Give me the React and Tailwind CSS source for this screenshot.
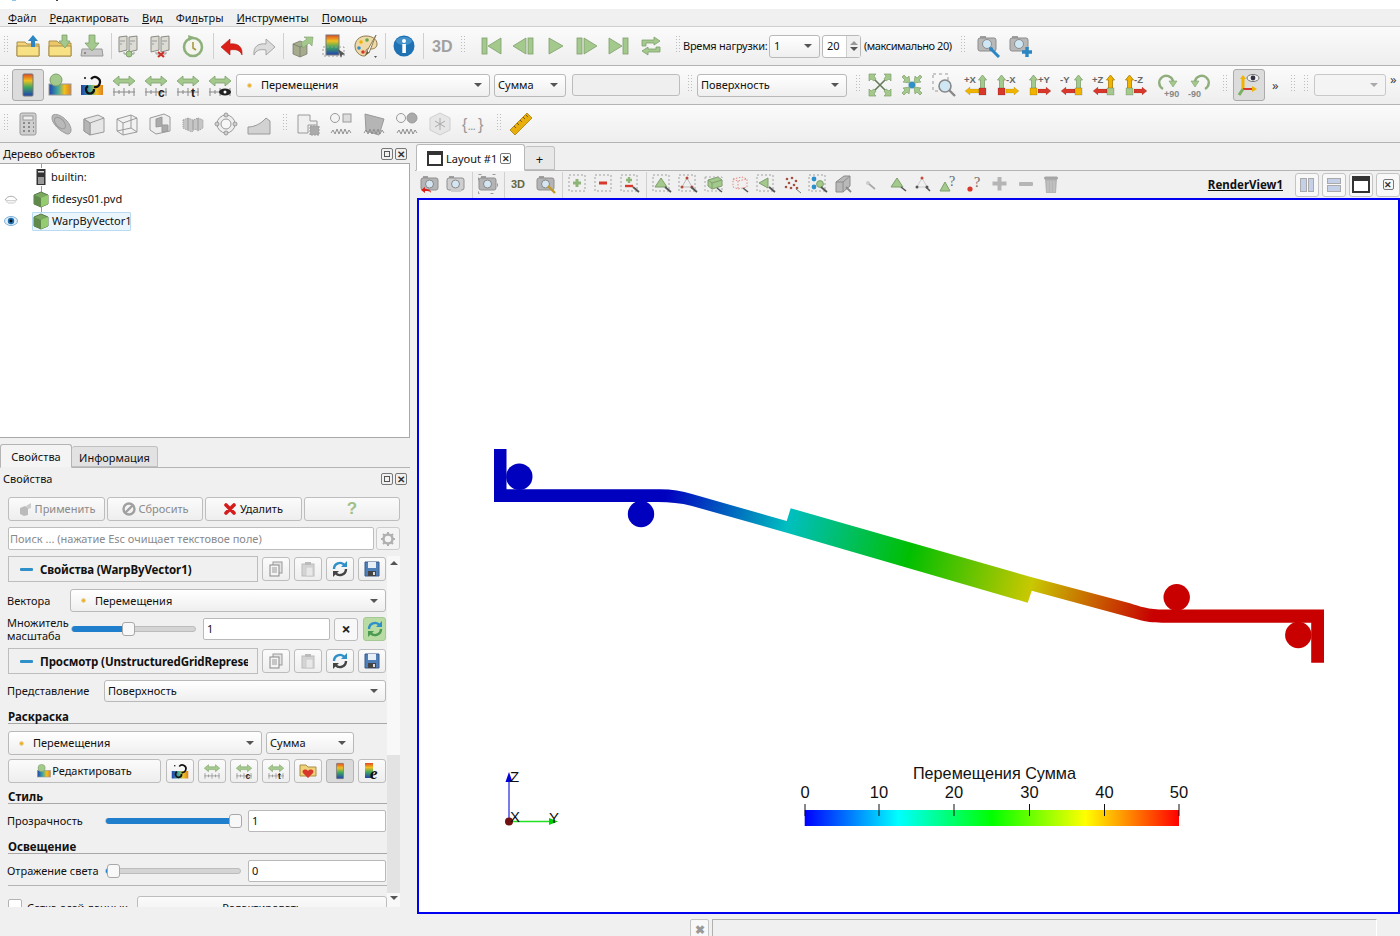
import React from 'react';

const GR = '#a3c98c';
const GS = '#7f9f6c';
const YL = '#f0b400';
const RD = '#d8382c';
const BL = '#2f8fc8';

const Svg = ({ s = 24, children }) => <svg width={s} height={s} viewBox="0 0 24 24" className="block shrink-0">{children}</svg>;

const T = ({ x, y, size = 7, fill = '#666', weight = 'bold', children, family = 'Liberation Sans', anchor = 'start', italic }) => <text x={x} y={y} fontSize={size} fontWeight={weight} fontFamily={family} fill={fill} textAnchor={anchor} fontStyle={italic ? 'italic' : 'normal'}>{children}</text>;

const ArrowUp = ({ x, y, h = 14, c = GR, s = GS, w = 6 }) => <path d={`M${x} ${y} l${w / 2 + 1} ${5} h${-w / 2 + 1} v${h - 5} h${-4} v${-(h - 5)} h${-w / 2 + 1} z`} fill={c} stroke={s} strokeWidth="0.8" />;

const FolderUp = () => <Svg>
    <path d="M1 8h8l2 2h12v12H1z" fill="#f3d478" stroke="#a88e48" />
    <path d="M1 12h22v10H1z" fill="#f8e084" stroke="#a88e48" />
    <path d="M17 1l5 6h-3v6h-4V7h-3z" fill="#2c86c4" />
  </Svg>;
const FolderDown = () => <Svg>
    <path d="M1 7h8l2 2h12v13H1z" fill="#edc66a" stroke="#a88e48" />
    <path d="M1 12h22v10H1z" fill="#f8e084" stroke="#a88e48" />
    <path d="M14 1h5v6h3l-5 7-6-7h3z" fill={GR} stroke={GS} strokeWidth="0.8" />
  </Svg>;
const SaveData = () => <Svg>
    <path d="M2 15h20l1 7H1z" fill="#c9c9c9" stroke="#999" />
    <circle cx="5" cy="19" r="1" fill="#777" />
    <path d="M9 1h6v8h4l-7 8-7-8h4z" fill={GR} stroke={GS} strokeWidth="0.8" />
  </Svg>;
const Srv = ({ x }) => <g>
    <path d={`M${x} 3l8-1v14l-8 2z`} fill="#dcdcd4" stroke="#8a8a84" />
    <path d={`M${x + 1} 7h5M${x + 1} 10h2`} stroke="#999" />
  </g>;
const Servers = ({ dot }) => <Svg>
    <Srv x={2} /><Srv x={12} />
    <path d="M7 18v2h10v-2" fill="none" stroke="#999" />
    {dot === 'g' ? <circle cx="12" cy="20" r="3" fill={GR} stroke={GS} /> : <path d="M9 18l6 5m0-5l-6 5" stroke="#c83228" strokeWidth="2.2" />}
  </Svg>;
const Recent = () => <Svg>
    <circle cx="12" cy="13" r="9" fill="#f5f5f0" stroke="#8eb07a" strokeWidth="2.6" />
    <path d="M12 8v6l3 2" stroke="#a89a40" strokeWidth="1.6" fill="none" />
    <path d="M7 1l6 2-5 4z" fill="#8eb07a" />
  </Svg>;
const Undo = () => <Svg>
    <path d="M1 13l9-8v5c7-1 13 2 12 11-2-5-6-6-12-5v5z" fill="#dc2018" stroke="#b01c14" strokeWidth="0.6" />
  </Svg>;
const Redo = () => <Svg>
    <path d="M23 13l-9-8v5C7 9 1 12 2 21c2-5 6-6 12-5v5z" fill="#dcdcdc" stroke="#a6a6a6" />
  </Svg>;
const Cube = ({ c = '#c9c9bd', s = '#777' }) => <g>
    <path d="M3 10l7-3 7 3v10l-7 3-7-3z" fill={c} stroke={s} strokeWidth="0.7" />
    <path d="M10 13v10M3 10l7 3 7-3" fill="none" stroke={s} strokeWidth="0.7" />
  </g>;
const ChangeInput = () => <Svg>
    <Cube c="#a6ab8e" s="#6f7466" />
    <path d="M11 9L17 5 14 3h9l-1 9-3-3-6 5z" fill={GR} stroke={GS} strokeWidth="0.6" />
  </Svg>;
const FindData = () => <Svg>
    <rect x="4" y="1" width="13" height="20" fill="url(#gScale)" stroke="#777" />
    <rect x="1" y="13" width="21" height="9" fill="none" stroke="#999" strokeDasharray="2 2" />
    <path d="M16 15l7 5-3 1-1 3z" fill="#555" />
  </Svg>;
const Palette = () => <Svg>
    <path d="M12 2C5 2 1 7 1 12c0 6 5 10 9 10 3 0 2-3 2-5 0-3 3-2 5-2 4 0 6-2 6-5 0-5-5-8-11-8z" fill="#f0d9a8" stroke="#8d7a50" />
    <circle cx="7" cy="8" r="1.8" fill={YL} /><circle cx="13" cy="6" r="1.8" fill="#60a848" />
    <circle cx="5" cy="14" r="1.8" fill={BL} /><circle cx="9" cy="18" r="1.8" fill={RD} />
    <path d="M22 1L13 17l2 2z" fill="#fff" stroke="#8d7a50" />
    <path d="M13 17l-2 5 4-3z" fill="#6a5a30" />
    <path d="M20 22l3 0-1.5 2z" fill="#555" />
  </Svg>;
const Info = () => <Svg>
    <circle cx="12" cy="12" r="10.5" fill="#1e72b4" />
    <ellipse cx="12" cy="7" rx="8" ry="4" fill="#5ba6da" opacity="0.6" />
    <rect x="10.3" y="10" width="3.6" height="9" fill="#fff" /><circle cx="12" cy="7" r="2" fill="#fff" />
  </Svg>;
const ThreeD = () => <Svg><T x={2} y={18} size={16} fill="#a0a0a0" family="Liberation Sans">3D</T></Svg>;

const Vcr = ({ kind }) => <Svg>
    <g fill={GR} stroke={GS} strokeWidth="0.8">
      {kind === 'first' && <><rect x="3" y="4" width="5" height="16" /><path d="M22 4L9 12l13 8z" /></>}
      {kind === 'prev' && <><path d="M15 4L2 12l13 8z" /><rect x="17" y="4" width="5" height="16" /></>}
      {kind === 'play' && <path d="M6 4l14 8-14 8z" />}
      {kind === 'next' && <><rect x="2" y="4" width="5" height="16" /><path d="M9 4l13 8-13 8z" /></>}
      {kind === 'last' && <><path d="M2 4l13 8-13 8z" /><rect x="16" y="4" width="5" height="16" /></>}
    </g>
  </Svg>;
const Loop = () => <Svg>
    <path d="M3 6h12V3l6 4-6 4V9H7v3H3zM21 18H9v3l-6-4 6-4v2h8v-2h4z" fill={GR} stroke={GS} strokeWidth="0.8" />
  </Svg>;
const CamIco = ({ children }) => <Svg>
    <rect x="3" y="2" width="6" height="3" fill="#a0a0a0" />
    <rect x="1" y="4" width="18" height="13" rx="2" fill="#b8b8b8" stroke="#8c8c8c" />
    <circle cx="10" cy="10" r="4.5" fill="#cfe6f4" stroke="#8c8c8c" />
    {children}
  </Svg>;

const ScaleIco = () => <Svg>
    <rect x="7" y="1" width="10" height="22" rx="1" fill="url(#gScale)" stroke="#777" />
  </Svg>;
const Edit = () => <Svg>
    <rect x="1" y="11" width="22" height="11" fill="url(#gScaleH)" stroke="#999" />
    <circle cx="8" cy="7" r="6" fill={GR} stroke={GS} />
  </Svg>;
const Link = () => <Svg>
    <rect x="1" y="12" width="22" height="10" fill="url(#gScaleH)" />
    <path d="M14 14a5 5 0 1 0-3-8M8 13a4 4 0 1 0 6 3" fill="none" stroke="#111" strokeWidth="2.2" />
    <circle cx="5" cy="5" r="1" fill="#111" />
  </Svg>;
const Rescale = ({ mark }) => <Svg>
    <path d="M1 8l6-5v3h10V3l6 5-6 5v-3H7v3z" fill={GR} stroke={GS} strokeWidth="0.8" />
    <path d="M1 19h22M2 15v8M12 15v8M22 15v8M7 17v4M17 17v4" stroke="#888" strokeWidth="1" />
    {mark === 'c' && <T x={14} y={24} size={12} fill="#222">c</T>}
    {mark === 't' && <T x={15} y={24} size={12} fill="#222">t</T>}
    {mark === 'e' && <><ellipse cx="17" cy="19" rx="6" ry="3.5" fill="#222" /><circle cx="17" cy="19" r="1.5" fill="#fff" /></>}
  </Svg>;

const Gray = ({ children }) => <Svg><g fill="#cfcfcf" stroke="#9a9a9a" strokeWidth="1">{children}</g></Svg>;
const Calc = () => <Gray>
    <rect x="4" y="1" width="16" height="22" rx="2" /><rect x="7" y="4" width="10" height="4" fill="#eee" />
    <path d="M7 11h2m3 0h2m3 0h1M7 15h2m3 0h2m3 0h1M7 19h2m3 0h2m3 0h1" strokeWidth="2" stroke="#8a8a8a" />
  </Gray>;
const Disc = () => <Gray>
    <path d="M4 3c6-3 18 7 18 15 0 4-3 5-6 3C9 18 0 8 4 3z" fill="#b9b9b9" />
    <ellipse cx="11" cy="11" rx="4" ry="7" transform="rotate(-42 11 11)" fill="none" />
  </Gray>;
const Box = () => <Gray>
    <path d="M2 7l14-4 6 3v14l-14 3-6-4z" fill="#e6e6e6" /><path d="M2 7l6 4v12M8 11l14-5" fill="none" />
    <path d="M2 7l6 4v12l-6-4z" fill="#b5b5b5" />
  </Gray>;
const BoxHollow = () => <Gray>
    <path d="M2 7l14-4 6 3v14l-14 3-6-4z" fill="#f2f2f2" /><path d="M2 7l6 4v12M8 11l14-5M2 19l14-3 6 4M16 3v13" fill="none" />
  </Gray>;
const BoxClip = () => <Gray>
    <path d="M2 6l14-4 6 3v14l-14 3-6-4z" fill="#eee" /><path d="M8 7l6-2v8h6v6l-6 1v-6l-6 1z" fill="#aaa" />
  </Gray>;
const Cloud = () => <Gray>
    <path d="M2 8l5-2 5 2 5-2 5 2v8l-5 3-3-2-3 3-5-2-4-2z" fill="#c6c6c6" strokeDasharray="1 1" /><path d="M7 6v12M12 8v10M17 6v12" />
  </Gray>;
const Ring = () => <Gray>
    <circle cx="12" cy="12" r="9" fill="#eee" /><circle cx="12" cy="12" r="5" fill="#f7f7f7" />
    <circle cx="12" cy="3" r="2" /><circle cx="12" cy="21" r="2" /><circle cx="3" cy="12" r="2" /><circle cx="21" cy="12" r="2" />
  </Gray>;
const Warp = () => <Gray><path d="M1 22v-7c6 0 13-3 18-9l4 3v13z" fill="#d2d2d2" /></Gray>;
const Extract = () => <Gray>
    <path d="M2 3h12v6h7v4h-9v8H2z" fill="#f0f0f0" /><rect x="14" y="14" width="9" height="9" strokeDasharray="2 1" fill="#aaa" />
  </Gray>;
const Wave = () => <path d="M2 21l2-3 2 4 2-5 2 5 2-5 2 5 2-5 2 5 2-4 2 3" fill="none" stroke="#8f8f8f" strokeWidth="1" />;
const Time1 = () => <Gray><circle cx="6" cy="6" r="4.5" fill="#f4f4f4" /><rect x="14" y="2" width="8" height="8" fill="#ddd" /><Wave /></Gray>;
const Time2 = () => <Gray><circle cx="6" cy="6" r="4.5" fill="#f4f4f4" /><circle cx="17" cy="6" r="5" fill="#aaa" /><Wave /></Gray>;
const Poly = () => <Gray><path d="M3 2l19 5-5 16-13-4z" fill="#b5b5b5" /><Wave /></Gray>;
const Star = () => <Gray><path d="M12 1l10 5v12l-10 5-10-5V6z" fill="#e6e6e6" stroke="#cfcfcf" /><path d="M12 6v12M7 9l10 6M17 9L7 15" stroke="#aaa" /></Gray>;
const Braces = () => <Svg><T x={1} y={18} size={16} weight="normal" fill="#999">{'{'}</T><T x={7} y={18} size={9} fill="#999">...</T><T x={17} y={18} size={16} weight="normal" fill="#999">{'}'}</T></Svg>;
const Ruler = () => <Svg>
    <path d="M1 18L18 1l5 5L6 23z" fill="#e8ae0c" stroke="#a97e08" strokeWidth="0.8" />
    <path d="M5 14l2 2M8 11l2 2M11 8l2 2M14 5l2 2M17 3l2 2" stroke="#7a5a08" strokeWidth="1" />
  </Svg>;
const ResetX = () => <Svg>
    <path d="M5 5l14 14M19 5L5 19" fill="none" stroke="#667a5c" strokeWidth="1.6" />
    <path d="M1 1h7L6 3l2 3-2 2-3-2-2 2zM23 1h-7l2 2-2 3 2 2 3-2 2 2zM1 23h7l-2-2 2-3-2-2-3 2-2-2zM23 23h-7l2-2-2-3 2-2 3 2 2-2z" fill={GR} stroke={GS} strokeWidth="0.7" />
  </Svg>;
const ZoomClosest = () => <Svg>
    <circle cx="12" cy="12" r="3.500" fill={BL} />
    <path d="M10 10l-7-1 2-2-3-3 2-2 3 3 2-2zM14 10l7-1-2-2 3-3-2-2-3 3-2-2zM10 14l-7 1 2 2-3 3 2 2 3-3 2 2zM14 14l7 1-2 2 3 3-2 2-3-3-2 2z" fill={GR} stroke={GS} strokeWidth="0.7" />
  </Svg>;
const ZoomBox = () => <Svg>
    <rect x="1" y="1" width="15" height="17" fill="none" stroke="#999" strokeDasharray="3 3" />
    <circle cx="13" cy="13" r="6" fill="#cfe6f4" stroke="#888" strokeWidth="1.6" />
    <path d="M17 17l6 6" stroke="#888" strokeWidth="2.4" />
  </Svg>;
const AxisBtn = ({ label, right, sq, up, h }) => {
  const bx = right ? 2 : 15;
  const ax = bx + 3.5;
  return <Svg>
      <ArrowUp x={ax} y={2} h={14} c={up} s={up === GR ? GS : '#a87c00'} />
      {right ? <path d={`M10 16h8v-2l5 4-5 4v-2h-8z`} fill={h} stroke="#0003" strokeWidth="0.5" /> : <path d={`M15 16H6v-2l-5 4 5 4v-2h9z`} fill={h} stroke="#0003" strokeWidth="0.5" />}
      <rect x={bx} y={15} width={7} height={7} fill={sq} stroke="#0004" strokeWidth="0.6" />
      <T x={right ? 10 : 0} y={10} size={9.500} fill="#666">{label}</T>
    </Svg>;
};
const Rot = ({ plus }) => <Svg>
    <path d={plus ? 'M7 16A7 7 0 1 1 17 8' : 'M17 16A7 7 0 1 0 7 8'} fill="none" stroke="#8fae7b" strokeWidth="2.4" />
    <path d={plus ? 'M13 8h8l-4 6z' : 'M3 8h8l-4 6z'} fill={GR} stroke={GS} strokeWidth="0.6" />
    <T x={plus ? 8 : 0} y={24} size={9} fill="#888">{plus ? '+90' : '-90'}</T>
  </Svg>;
const AxesEye = () => <Svg>
    <path d="M6 16V6" stroke={YL} strokeWidth="3" />
    <path d="M6 16h10" stroke={RD} strokeWidth="2" />
    <path d="M6 16l-4 6" stroke="#7ab060" strokeWidth="3" />
    <path d="M3 6l3-4 3 4zM15 13l5 3-5 3z" fill={YL} />
    <ellipse cx="16" cy="5" rx="6" ry="3.5" fill="#f4f4f4" stroke="#777" /><circle cx="16" cy="5" r="2.4" fill="#334" />
  </Svg>;

const Dash = ({ children, cur }) => <svg width="20" height="20" viewBox="0 0 20 20" className="block shrink-0">
    <rect x="1" y="1" width="16" height="16" fill="none" stroke="#a0a0a0" strokeDasharray="2 2" />
    {children}
    {cur && <path d="M13 13l6 5" stroke="#555" strokeWidth="1.8" />}
  </svg>;
const Plain = ({ children }) => <svg width="20" height="20" viewBox="0 0 20 20" className="block shrink-0">{children}</svg>;
const Cam20 = ({ children, c = '#b4b4b4' }) => <Plain>
    <rect x="3" y="2" width="5" height="2" fill="#a0a0a0" />
    <rect x="1" y="4" width="17" height="12" rx="2" fill={c} stroke="#909090" />
    <circle cx="9.5" cy="10" r="4" fill="#d4e6f2" stroke="#888" />
    {children}
  </Plain>;
const Tri = ({ stroke = GS, fill = GR }) => <path d="M9 4l6 9H3z" fill={fill} stroke={stroke} />;

const viewIcons = {
  a: <Cam20><path d="M1 16l4-3v2c4 0 6 1 6 4-1-2-3-2-6-2v2z" fill="#d8231c" /></Cam20>,
  b: <Cam20 c="#cfcfcf"><path d="M5 15h10v3H5z" fill="#ccc" /></Cam20>,
  c: <Cam20><rect x="0.5" y="0.5" width="19" height="19" fill="none" stroke="#999" strokeDasharray="3 11" /></Cam20>,
  d: <Plain><T x={1} y={14} size={11} fill="#666642">3D</T></Plain>,
  e: <Cam20><path d="M12 12l7 7" stroke="#c09a28" strokeWidth="2.4" /></Cam20>,
  plus: <Dash><path d="M9 5v8M5 9h8" stroke="#8fb478" strokeWidth="3" /></Dash>,
  minus: <Dash><path d="M5 9h8" stroke="#d8382c" strokeWidth="3" /></Dash>,
  plusminus: <Dash cur><path d="M9 3v6M6 6h6" stroke="#8fb478" strokeWidth="2.4" /><path d="M5 12h8" stroke="#d8382c" strokeWidth="2.4" /></Dash>,
  tri: <Dash cur><Tri /></Dash>,
  pts: <Dash cur><path d="M9 4l5 9H4z" fill="none" stroke="#bbb" /><circle cx="9" cy="4" r="1.5" fill="#b84a3c" /><circle cx="4" cy="13" r="1.5" fill="#b84a3c" /><circle cx="14" cy="13" r="1.5" fill="#b84a3c" /></Dash>,
  blk: <Plain><path d="M4 6l10-3 4 3v6l-10 3-4-3z" fill={GR} stroke={GS} /><path d="M4 6l4 3v6M8 9l10-3" fill="none" stroke={GS} /><rect x="1" y="3" width="17" height="14" fill="none" stroke="#aaa" strokeDasharray="2 2" /><path d="M13 14l5 4" stroke="#555" strokeWidth="1.6" /></Plain>,
  frus: <Plain><path d="M3 5l9-2 5 2v8l-9 2-5-2z" fill="none" stroke="#e08a80" strokeDasharray="1.5 1.5" /><path d="M8 7v8M3 5l5 2 9-2" fill="none" stroke="#e08a80" strokeDasharray="1.5 1.5" /><path d="M13 14l5 4" stroke="#555" strokeWidth="1.6" /></Plain>,
  poly: <Dash cur><path d="M3 9l9-5v10z" fill={GR} stroke={GS} /></Dash>,
  dots: <Plain><g fill="#a85040"><circle cx="5" cy="5" r="1.3" /><circle cx="10" cy="4" r="1.3" /><circle cx="14" cy="7" r="1.3" /><circle cx="7" cy="9" r="1.3" /><circle cx="12" cy="11" r="1.3" /><circle cx="4" cy="13" r="1.3" /><circle cx="9" cy="14" r="1.3" /><circle cx="15" cy="14" r="1.3" /></g><path d="M14 15l5 4" stroke="#777" /></Plain>,
  blue: <Dash cur><circle cx="6" cy="5" r="2.4" fill={BL} /><circle cx="6" cy="13" r="2.4" fill={BL} /><circle cx="12" cy="10" r="3.4" fill={GR} stroke={GS} /></Dash>,
  graybox: <Plain><path d="M2 8l8-6h6v10l-7 6H2z" fill="#b9b9b9" stroke="#8c8c8c" /><path d="M2 8h7v10M9 8l7-6" fill="none" stroke="#8c8c8c" /><path d="M12 13l5 5" stroke="#888" strokeWidth="1.8" /></Plain>,
  small: <Plain><circle cx="7" cy="9" r="2" fill="#ccc" /><path d="M8 10l6 5" stroke="#aaa" strokeWidth="1.8" /></Plain>,
  tri2: <Plain><Tri /><path d="M13 13l5 4" stroke="#555" strokeWidth="1.6" /></Plain>,
  pts2: <Plain><path d="M9 4l5 9H4z" fill="none" stroke="#ccc" /><circle cx="9" cy="4" r="1.5" fill="#c84a3c" /><circle cx="4" cy="13" r="1.5" fill="#555" /><circle cx="14" cy="13" r="1.5" fill="#555" /><path d="M13 13l4 4" stroke="#555" strokeWidth="1.6" /></Plain>,
  triq: <Plain><path d="M6 8l5 9H1z" fill={GR} stroke={GS} /><T x={10} y={12} size={14} weight="normal" fill="#666" family="Liberation Serif">?</T></Plain>,
  dotq: <Plain><circle cx="5" cy="15" r="2.6" fill="#d8382c" /><T x={9} y={13} size={14} weight="normal" fill="#666" family="Liberation Serif">?</T></Plain>,
  gplus: <Plain><path d="M7.5 3h4v4.500h5v4h-5v5h-4v-5h-5v-4h5z" fill="#b5b5b5" /></Plain>,
  gminus: <Plain><rect x="3" y="8" width="14" height="4" rx="1" fill="#b5b5b5" /></Plain>,
  trash: <Plain><path d="M4 5h12l-1 14H5z" fill="#b5b5b5" /><rect x="3" y="2.500" width="14" height="3" rx="1.500" fill="#a5a5a5" /><path d="M7 7v11M10 7v11M13 7v11" stroke="#c9c9c9" /></Plain>
};

const FloatClose = () => <div className="flex items-center gap-[2px]">
    <span className="w-[12px] h-[12px] rounded-[2px] border border-[#777] flex items-center justify-center">
      <span className="w-[6px] h-[6px] border border-[#555]" />
    </span>
    <span className="w-[12px] h-[12px] rounded-[2px] border border-[#777] flex items-center justify-center text-[#333] text-[10px] font-bold leading-none">✕</span>
  </div>;

const Grip = ({ w = 12, x = 4, h = 20 }) => <div className="shrink-0" style={{ width: w, paddingLeft: x }}>
    <svg width="4" height={h} className="block">
      {Array.from({ length: Math.floor(h / 3) }, (_, i) => <g key={i} fill="#bdbdbd"><rect x="0" y={i * 3} width="1" height="1" /><rect x="3" y={i * 3} width="1" height="1" /></g>)}
    </svg>
  </div>;
const Sep = ({ w = 6, x = 3 }) => <div className="shrink-0 h-[26px]" style={{ width: w, paddingLeft: x }}><div className="w-px h-full bg-[#d0d0d0]" /></div>;
const Tb = ({ children, w = 32, active }) => <div className={`shrink-0 h-[32px] flex items-center justify-center rounded-[3px] ${active ? 'bg-[#dcdcdc] border border-[#ababab]' : ''}`} style={{ width: w }}>{children}</div>;
const Bar = ({ children, h = 'h-[39px]' }) => <div className={`flex items-center ${h} border-b border-[#b4b4b4] bg-gradient-to-b from-[#fbfbfb] to-[#eeeeee] overflow-hidden`}>{children}</div>;
const Caret = ({ c = '#555' }) => <span className="ml-auto w-0 h-0 border-l-[4px] border-r-[4px] border-t-[4px] border-l-transparent border-r-transparent shrink-0" style={{ borderTopColor: c }} />;
const Combo = ({ w, label, dot, h = 'h-[23px]', className = '', pad = 'pl-[3px]' }) => <div className={`flex items-center ${h} ${pad} pr-[7px] shrink-0 border border-[#b9b9b9] rounded-[3px] bg-gradient-to-b from-[#ffffff] to-[#efefef] text-[#111] ${className}`} style={{ width: w }}>
    {dot && <span className="block ml-[7px] mr-[9px] w-[5px] h-[5px] rounded-full bg-[#eeb020] border border-[#e8d8a8] shrink-0" />}
    <span className="truncate">{label}</span>
    <Caret />
  </div>;

const Menu = ({ first, rest, pre }) => <span>{pre}<span className="underline">{first}</span>{rest}</span>;

const Cell = ({ children, active, w = 28, green }) => <div className={`shrink-0 h-[24px] flex items-center justify-center rounded-[3px] border overflow-hidden ${active ? 'bg-[#dadada] border-[#b4b4b4]' : green ? 'bg-[#b8dca4] border-[#a6c896]' : 'bg-gradient-to-b from-[#fbfbfb] to-[#eeeeee] border-[#bdbdbd]'}`} style={{ width: w }}>{children}</div>;
const CopyI = () => <svg width="16" height="16" viewBox="0 0 16 16" className="block">
    <rect x="5" y="1" width="9" height="11" fill="#e4e4e4" stroke="#999" />
    <rect x="2" y="4" width="9" height="11" fill="#f4f4f4" stroke="#888" />
    <path d="M4 7h5M4 9h5M4 11h5" stroke="#999" />
  </svg>;
const PasteI = () => <svg width="16" height="16" viewBox="0 0 16 16" className="block">
    <rect x="2" y="3" width="12" height="12" fill="#d4d4d4" stroke="#bbb" /><rect x="5" y="1" width="6" height="3" fill="#bbb" /><rect x="6" y="6" width="7" height="9" fill="#e8e8e8" stroke="#ccc" />
  </svg>;
const RefreshI = ({ c = BL, d = '#444' }) => <svg width="18" height="18" viewBox="0 0 18 18" className="block">
    <path d="M3 9a6 6 0 0 1 10.500-4" fill="none" stroke={c} strokeWidth="2.4" /><path d="M15 9a6 6 0 0 1-10.500 4" fill="none" stroke={d} strokeWidth="2.4" />
    <path d="M16 1v6h-6z" fill={c} /><path d="M2 17v-6h6z" fill={d} />
  </svg>;
const SaveI = () => <svg width="16" height="16" viewBox="0 0 16 16" className="block">
    <path d="M1 1h14v14H1z" fill="#4f7fb8" stroke="#3a5a88" /><rect x="4" y="1" width="8" height="6" fill="#e6eef6" /><rect x="4" y="10" width="8" height="5" fill="#444" /><rect x="9" y="11" width="2" height="3" fill="#ddd" />
  </svg>;
const Tools = () => <div className="flex gap-[4px] ml-[4px]">
    <Cell><CopyI /></Cell><Cell><PasteI /></Cell><Cell><RefreshI /></Cell><Cell><SaveI /></Cell>
  </div>;
const Section = ({ children }) => <div className="flex items-center h-[26px]">
    <div className="w-[250px] h-full shrink-0 flex items-center border border-[#bdbdbd] pl-[11px] overflow-hidden">
      <span className="w-[13px] h-[3px] bg-[#2f8fc8] rounded-[1px] shrink-0 mr-[7px]" />
      <span className="font-bold text-[11.5px] pt-[2px] whitespace-nowrap text-[#111] w-[208px] overflow-hidden tracking-[-0.1px]">{children}</span>
    </div>
    <Tools />
  </div>;
const Slider = ({ w, pos }) => <div className="relative h-[6px] rounded-full bg-[#d4d4d4] border border-[#bcbcbc]" style={{ width: w }}>
    <div className="absolute left-0 top-[-1px] h-[6px] rounded-full bg-[#1f7fcc]" style={{ width: pos }} />
    <div className="absolute top-[-5px] w-[13px] h-[14px] rounded-[3px] border border-[#a8a8a8] bg-[#f8f8f8]" style={{ left: pos - 6 }} />
  </div>;
const Field = ({ w, children }) => <div className="h-[22px] shrink-0 border border-[#b9b9b9] rounded-[2px] bg-white flex items-center pl-[3px] text-[#111]" style={{ width: w }}>{children}</div>;
const Head = ({ children }) => <div className="border-b border-[#a8a8a8] font-bold text-[11.5px] text-[#111] leading-[14px] h-[14px]">{children}</div>;

const Tree = ({ children, eye }) => <div className="relative flex items-center h-[22px]">
    <span className="w-[22px] flex justify-center">{eye}</span>
    {children}
  </div>;
const GreenCube = () => <svg width="18" height="18" viewBox="0 0 18 18" className="block">
    <path d="M2 5l7-3 7 3v9l-7 3-7-3z" fill="#7aa860" stroke="#5a7a48" /><path d="M9 8v9L2 14V5z" fill="#5f8a4c" /><path d="M9 8l7-3v9l-7 3z" fill="#96cc70" />
  </svg>;
const EyeOn = () => <svg width="14" height="10" viewBox="0 0 14 10" className="block"><ellipse cx="7" cy="5" rx="6.500" ry="4.500" fill="#e4eef6" stroke="#7ab0d8" /><circle cx="7" cy="5" r="3.200" fill="#1c6cae" /><circle cx="7" cy="5" r="1.400" fill="#111" /></svg>;
const EyeOff = () => <svg width="14" height="10" viewBox="0 0 14 10" className="block"><path d="M1 6c3-5 9-5 12 0" fill="none" stroke="#aaa" /><path d="M1 6c3 1 9 1 12 0M3 7v2M5 8v2M7 8v2M9 8v2M11 7v2" fill="none" stroke="#bbb" strokeWidth="0.8" /></svg>;

const LegendTick = ({ x, label }) => <g>
    <rect x={x - 0.500} y={804} width="1" height="12" fill="#111" />
    <text x={x} y={798} textAnchor="middle" fontSize="16.500" fontFamily="Liberation Sans" fill="#111">{label}</text>
  </g>;

const Render = () => <svg viewBox="419 200 980 712" width="980" height="712" className="block">
    <defs>
      <linearGradient id="gBeam" gradientUnits="userSpaceOnUse" x1="668" y1="487" x2="1152" y2="620">
        <stop offset="0" stopColor="#0000bf" />
        <stop offset="0.25" stopColor="#00bfbf" />
        <stop offset="0.5" stopColor="#00bf00" />
        <stop offset="0.75" stopColor="#c8c800" />
        <stop offset="1" stopColor="#c80000" />
      </linearGradient>
      <linearGradient id="gLegend" x1="0" x2="1" y1="0" y2="0">
        <stop offset="0" stopColor="#0000ff" />
        <stop offset="0.25" stopColor="#00ffff" />
        <stop offset="0.5" stopColor="#00ff00" />
        <stop offset="0.75" stopColor="#ffff00" />
        <stop offset="1" stopColor="#ff0000" />
      </linearGradient>
    </defs>
    <circle cx="519.300" cy="476.700" r="13.200" fill="#0000bf" />
    <circle cx="641" cy="514" r="13.200" fill="#0000bf" />
    <circle cx="1176.700" cy="597.300" r="13.200" fill="#c80000" />
    <circle cx="1298.300" cy="635" r="13.200" fill="#c80000" />
    <path d="M494 449H506.500V489.300H660C672 489.300 682 491 692 494L786.700 521L790.700 508.300L1030 576.700L1130 603.300C1140 606.500 1148 609.600 1165 609.600H1324V662.700H1311.200V622.700H1162C1152 622.700 1147 622 1137 619.300L1031.700 590.700L1027.700 602.700L786.700 532.700L692 506C680 503 670 502 658 502H494Z" fill="url(#gBeam)" />
    <rect x="804.700" y="810" width="374.300" height="16" fill="url(#gLegend)" />
    <text x="994.500" y="779" textAnchor="middle" fontSize="16.200" fontFamily="Liberation Sans" fill="#111">Перемещения Сумма</text>
    <LegendTick x={805} label="0" /><LegendTick x={879} label="10" /><LegendTick x={954} label="20" /><LegendTick x={1029.500} label="30" /><LegendTick x={1104.500} label="40" /><LegendTick x={1179} label="50" />
    <path d="M509 821V780" stroke="#2020e0" strokeWidth="1.200" />
    <path d="M509 772l3.500 10h-7z" fill="#0000d8" />
    <path d="M509 821.500H552" stroke="#22e022" strokeWidth="1.600" />
    <path d="M558 821.500l-9-3.500v7z" fill="#00d000" />
    <circle cx="509" cy="821.500" r="4" fill="#701010" />
    <text x="510" y="782" fontSize="15" fontFamily="Liberation Sans" fill="#111">Z</text>
    <text x="510" y="822" fontSize="15" fontFamily="Liberation Sans" fill="#111">X</text>
    <text x="549" y="823" fontSize="15" fontFamily="Liberation Sans" fill="#111">Y</text>
  </svg>;

export default function App() {
  return <div className="w-[1400px] h-[936px] overflow-hidden bg-[#f0f0f0] text-[11px] leading-[14px] text-[#111] font-['Noto_Sans',sans-serif] flex flex-col">
      <svg width="0" height="0" className="absolute">
        <defs>
          <linearGradient id="gScale" x1="0" x2="0" y1="0" y2="1">
            <stop offset="0" stopColor="#e04a20" /><stop offset="0.3" stopColor="#f0c020" /><stop offset="0.6" stopColor="#40a860" /><stop offset="1" stopColor="#2040b0" />
          </linearGradient>
          <linearGradient id="gScaleH" x1="0" x2="1" y1="0" y2="0">
            <stop offset="0" stopColor="#2040b0" /><stop offset="0.4" stopColor="#40a8a0" /><stop offset="0.7" stopColor="#f0c020" /><stop offset="1" stopColor="#e08020" />
          </linearGradient>
        </defs>
      </svg>
      <div className="h-[9px] bg-white shrink-0 flex items-start pl-[12px] gap-[40px]">
        <span className="w-[4px] h-px bg-[#8cc4ec]" /><span className="w-[2px] h-px bg-[#444]" />
      </div>
      <div className="h-[18px] shrink-0 flex items-center gap-[13px] pl-[8px] border-b border-[#cfcfcf]">
        <Menu first="Ф" rest="айл" /><Menu first="Р" rest="едактировать" /><Menu first="В" rest="ид" /><Menu pre="Фи" first="л" rest="ьтры" /><Menu first="И" rest="нструменты" /><Menu first="П" rest="омощь" />
      </div>

      <Bar>
        <Grip />
        <Tb><FolderUp /></Tb><Tb><FolderDown /></Tb><Tb><SaveData /></Tb>
        <Sep w={5} />
        <Tb><Servers dot="g" /></Tb><Tb><Servers dot="r" /></Tb><Tb><Recent /></Tb>
        <Sep w={7} x={4} />
        <Tb><Undo /></Tb><Tb><Redo /></Tb>
        <Sep />
        <Tb><ChangeInput /></Tb><Tb><FindData /></Tb><Tb><Palette /></Tb>
        <Sep />
        <Tb><Info /></Tb>
        <Sep />
        <Tb><ThreeD /></Tb>
        <Grip w={17} x={3} />
        <Tb><Vcr kind="first" /></Tb><Tb><Vcr kind="prev" /></Tb><Tb><Vcr kind="play" /></Tb><Tb><Vcr kind="next" /></Tb><Tb><Vcr kind="last" /></Tb><Tb><Loop /></Tb>
        <Grip w={16} x={9} />
        <span className="w-[86px] whitespace-nowrap shrink-0 tracking-[-0.25px]">Время нагрузки:</span>
        <Combo w={51} label="1" pad="pl-[4px]" />
        <div className="ml-[2px] w-[39px] h-[23px] shrink-0 border border-[#b9b9b9] rounded-[3px] bg-white flex items-center pl-[4px]">
          <span>20</span>
          <div className="ml-auto w-[14px] h-full border-l border-[#d0d0d0] bg-[#f0f0f0] flex flex-col items-center justify-center gap-[2px]">
            <span className="w-0 h-0 border-l-[4px] border-r-[4px] border-b-[4px] border-l-transparent border-r-transparent border-b-[#999]" />
            <span className="w-0 h-0 border-l-[4px] border-r-[4px] border-t-[4px] border-l-transparent border-r-transparent border-t-[#555]" />
          </div>
        </div>
        <span className="ml-[3px] w-[91px] whitespace-nowrap shrink-0 tracking-[-0.45px]">(максимально 20)</span>
        <Grip w={18} x={6} />
        <Tb><CamIco><path d="M14 15l8 8" stroke="#2c86c4" strokeWidth="3" /><circle cx="14" cy="15" r="2" fill="#2c86c4" /></CamIco></Tb>
        <Tb><CamIco><path d="M18 13v10M13 18h10" stroke="#2c86c4" strokeWidth="3.400" /></CamIco></Tb>
      </Bar>

      <Bar>
        <Grip />
        <Tb active><ScaleIco /></Tb><Tb><Edit /></Tb><Tb><Link /></Tb><Tb><Rescale /></Tb><Tb><Rescale mark="c" /></Tb><Tb><Rescale mark="t" /></Tb><Tb><Rescale mark="e" /></Tb>
        <Combo w={254} label="Перемещения" dot />
        <Combo w={72} label="Сумма" className="ml-[4px]" />
        <div className="ml-[6px] w-[108px] h-[22px] shrink-0 border border-[#bdbdbd] rounded-[3px] bg-[#efefef]" />
        <Grip w={17} x={8} />
        <Combo w={150} label="Поверхность" />
        <Grip w={17} x={9} />
        <Tb><ResetX /></Tb><Tb><ZoomClosest /></Tb><Tb><ZoomBox /></Tb>
        <Tb><AxisBtn label="+X" sq={RD} up={GR} h={YL} /></Tb>
        <Tb><AxisBtn label="-X" right sq={RD} up={GR} h={YL} /></Tb>
        <Tb><AxisBtn label="+Y" right sq={YL} up={GR} h={RD} /></Tb>
        <Tb><AxisBtn label="-Y" sq={YL} up={GR} h={RD} /></Tb>
        <Tb><AxisBtn label="+Z" sq={GR} up={YL} h={RD} /></Tb>
        <Tb><AxisBtn label="-Z" right sq={GR} up={YL} h={RD} /></Tb>
        <Tb><Rot plus /></Tb><Tb><Rot /></Tb>
        <Grip w={17} x={7} />
        <Tb active><AxesEye /></Tb>
        <span className="w-[22px] pl-[7px] shrink-0 text-[#444] text-[13px]">»</span>
        <Grip w={17} x={4} /><Grip w={10} x={0} />
        <div className="w-[72px] h-[22px] shrink-0 border border-[#c8c8c8] rounded-[3px] bg-[#f4f4f4] flex items-center pr-[7px]"><Caret c="#aaa" /></div>
        <span className="ml-[4px] text-[#444] text-[13px] -translate-y-[6px]">»</span>
      </Bar>

      <Bar h="h-[38px]">
        <Grip />
        <Tb><Calc /></Tb><Tb w={33}><Disc /></Tb><Tb w={33}><Box /></Tb><Tb w={33}><BoxHollow /></Tb><Tb w={33}><BoxClip /></Tb><Tb w={33}><Cloud /></Tb><Tb w={33}><Ring /></Tb><Tb w={33}><Warp /></Tb>
        <Grip w={16} x={8} />
        <Tb w={33}><Extract /></Tb><Tb w={33}><Time1 /></Tb><Tb w={33}><Poly /></Tb><Tb w={33}><Time2 /></Tb><Tb w={33}><Star /></Tb><Tb w={33}><Braces /></Tb>
        <Grip w={16} x={8} />
        <Tb><Ruler /></Tb>
      </Bar>

      <div className="flex flex-1 min-h-0">
        <div className="w-[410px] shrink-0 flex flex-col min-h-0">
          <div className="h-[19px] shrink-0 flex items-center justify-between pl-[3px] pr-[3px] mt-[1px]">
            <span>Дерево объектов</span>
            <FloatClose />
          </div>
          <div className="h-[275px] shrink-0 bg-white border-t border-b border-r border-[#a8a8a8] pt-[2px] relative">
            <div className="absolute left-[41px] top-0 bottom-[212px] w-px bg-[#9a9a9a]" />
            <Tree><span className="absolute left-[35px] bg-white"><svg width="12" height="18" viewBox="0 0 12 18" className="block"><rect x="1.500" y="1" width="9" height="16" fill="#333" /><rect x="3" y="3" width="6" height="1.500" fill="#ddd" /><rect x="3" y="9" width="6" height="7" fill="#999" /></svg></span><span className="absolute left-[51px]">builtin:</span></Tree>
            <Tree eye={<EyeOff />}><span className="absolute left-[32px]"><GreenCube /></span><span className="absolute left-[52px]">fidesys01.pvd</span></Tree>
            <Tree eye={<EyeOn />}>
              <span className="absolute left-[32px] w-[99px] h-[19px] border border-[#b8daf2] bg-[#eaf5fc] rounded-[1px]" />
              <span className="absolute left-[32px]"><GreenCube /></span><span className="absolute left-[52px]">WarpByVector1</span>
            </Tree>
          </div>
          <div className="h-[6px] shrink-0" />
          <div className="h-[24px] shrink-0 flex items-end border-b border-[#b4b4b4] relative">
            <div className="w-[72px] h-[24px] -mb-px bg-[#f4f4f4] border border-[#b4b4b4] border-b-[#f0f0f0] rounded-t-[3px] flex items-center justify-center pt-[2px]">Свойства</div>
            <div className="w-[86px] h-[21px] bg-[#e2e2e2] border border-l-0 border-[#c0c0c0] rounded-t-[3px] flex items-center justify-center pt-[2px]">Информация</div>
          </div>
          <div className="h-[22px] shrink-0 flex items-center justify-between pl-[3px] pr-[3px]">
            <span>Свойства</span>
            <FloatClose />
          </div>
          <div className="mt-[7px] pl-[8px] w-[400px] flex gap-[2px] shrink-0">
            <div className="w-[97px] h-[24px] border border-[#bdbdbd] rounded-[3px] bg-gradient-to-b from-[#fbfbfb] to-[#eeeeee] flex items-center justify-center gap-[1px] text-[#8a8a8a]">
              <svg width="16" height="16" viewBox="0 0 16 16" className="block"><path d="M2 7l5-2 3 2v7l-4 1-4-2z" fill="#bbb" /><path d="M8 5l5-3v5l-3 1z" fill="#ccc" /></svg>Применить
            </div>
            <div className="w-[96px] h-[24px] border border-[#bdbdbd] rounded-[3px] bg-gradient-to-b from-[#fbfbfb] to-[#eeeeee] flex items-center justify-center gap-[1px] text-[#8a8a8a]">
              <svg width="16" height="16" viewBox="0 0 16 16" className="block"><circle cx="8" cy="8" r="5.500" fill="none" stroke="#a0a0a0" strokeWidth="2.400" /><path d="M4 12l8-8" stroke="#a0a0a0" strokeWidth="2.400" /></svg>Сбросить
            </div>
            <div className="w-[97px] h-[24px] border border-[#bdbdbd] rounded-[3px] bg-gradient-to-b from-[#fbfbfb] to-[#eeeeee] flex items-center justify-center gap-[4px]">
              <svg width="12" height="12" viewBox="0 0 12 12" className="block"><path d="M2 2l8 8m0-8l-8 8" stroke="#d41c1c" strokeWidth="3.600" strokeLinecap="round" /></svg>Удалить
            </div>
            <div className="w-[96px] h-[24px] border border-[#bdbdbd] rounded-[3px] bg-gradient-to-b from-[#fbfbfb] to-[#eeeeee] flex items-center justify-center text-[#a0c088] text-[17px] font-bold font-['Liberation_Sans',sans-serif]">?</div>
          </div>
          <div className="mt-[6px] pl-[8px] w-[400px] flex justify-between shrink-0">
            <div className="w-[366px] h-[23px] bg-white border border-[#bdbdbd] rounded-[2px] flex items-center pl-[1px] text-[#8a8a8a] whitespace-nowrap">Поиск ... (нажатие Esc очищает текстовое поле)</div>
            <div className="w-[24px] h-[23px] rounded-[3px] border border-[#cccccc] bg-[#f4f4f4] flex items-center justify-center text-[#b0b0b0]">
              <svg width="16" height="16" viewBox="0 0 16 16" className="block"><circle cx="8" cy="8" r="4.500" fill="none" stroke="#b0b0b0" strokeWidth="2.500" /><path d="M8 1v3M8 12v3M1 8h3M12 8h3M3 3l2 2M11 11l2 2M13 3l-2 2M5 11l-2 2" stroke="#b0b0b0" strokeWidth="2" /></svg>
            </div>
          </div>
          <div className="mt-[6px] h-[351px] shrink-0 flex overflow-hidden">
            <div className="w-[387px] shrink-0 pl-[8px] overflow-hidden">
              <Section>Свойства (WarpByVector1)</Section>
              <div className="flex items-center mt-[7px] h-[23px]">
                <span className="w-[62px] -ml-[1px]">Вектора</span>
                <Combo w={316} label="Перемещения" dot className="ml-[1px]" />
              </div>
              <div className="flex items-center mt-[4px] h-[26px]">
                <span className="w-[62px] -ml-[1px] leading-[13px]">Множитель масштаба</span>
                <div className="ml-[2px] w-[132px] shrink-0"><Slider w={125} pos={56} /></div>
                <Field w={127}>1</Field>
                <div className="ml-[4px] w-[24px] h-[23px] shrink-0 flex items-center justify-center rounded-[3px] border border-[#bdbdbd] bg-[#f8f8f8] text-[#222] font-bold text-[16px]">×</div>
                <div className="ml-[5px]"><Cell green w={23}><RefreshI c="#2f8fc8" d="#4a9a50" /></Cell></div>
              </div>
              <div className="mt-[6px]"><Section>Просмотр (UnstructuredGridRepresentation)</Section></div>
              <div className="flex items-center mt-[6px] h-[22px]">
                <span className="w-[96px] -ml-[1px]">Представление</span>
                <Combo w={282} h="h-[22px]" label="Поверхность" className="ml-[1px]" />
              </div>
              <div className="mt-[8px]"><Head>Раскраска</Head></div>
              <div className="flex items-center mt-[7px] gap-[4px]">
                <Combo w={254} h="h-[24px]" label="Перемещения" dot />
                <Combo w={88} h="h-[22px]" label="Сумма" />
              </div>
              <div className="flex items-center mt-[4px] gap-[4px]">
                <div className="w-[153px] h-[24px] mr-[1px] shrink-0 border border-[#bdbdbd] rounded-[3px] bg-gradient-to-b from-[#fbfbfb] to-[#eeeeee] flex items-center justify-center gap-[1px]">
                  <span className="scale-[0.6] -mx-[5px]"><Edit /></span>Редактировать
                </div>
                <Cell><span className="scale-[0.75]"><Link /></span></Cell>
                <Cell><span className="scale-[0.7]"><Rescale /></span></Cell>
                <Cell><span className="scale-[0.7]"><Rescale mark="c" /></span></Cell>
                <Cell><span className="scale-[0.7]"><Rescale mark="t" /></span></Cell>
                <Cell><svg width="18" height="18" viewBox="0 0 18 18" className="block"><path d="M1 3h6l2 2h8v9H1z" fill="#f0d278" stroke="#a88e48" /><path d="M9 16L4 11c-2-3 3-5 5-2 2-3 7-1 5 2z" fill="#d8382c" /></svg></Cell>
                <Cell active><span className="scale-[0.7]"><ScaleIco /></span></Cell>
                <Cell><svg width="20" height="20" viewBox="0 0 20 20" className="block"><rect x="3" y="2" width="8" height="15" fill="url(#gScale)" /><text x="8" y="18" fontSize="17" fontWeight="bold" fontStyle="italic" fontFamily="Liberation Serif" fill="#111">e</text></svg></Cell>
              </div>
              <div className="mt-[7px]"><Head>Стиль</Head></div>
              <div className="flex items-center mt-[6px]">
                <span className="w-[97px] -ml-[1px]">Прозрачность</span>
                <div className="w-[143px] shrink-0 ml-[1px]"><Slider w={136} pos={129} /></div>
                <Field w={138}>1</Field>
              </div>
              <div className="mt-[8px]"><Head>Освещение</Head></div>
              <div className="flex items-center mt-[6px]">
                <span className="w-[97px] -ml-[1px] whitespace-nowrap">Отражение света</span>
                <div className="w-[143px] shrink-0 ml-[1px]"><Slider w={136} pos={7} /></div>
                <Field w={138}>0</Field>
              </div>
              <div className="mt-[3px] border-b border-[#b4b4b4]" />
              <div className="flex items-start mt-[10px] gap-[5px] h-[24px]">
                <span className="mt-[3px] w-[14px] h-[14px] shrink-0 bg-white border border-[#b4b4b4] rounded-[2px]" />
                <span className="mt-[5px] w-[109px] whitespace-nowrap">Сетка осей данных</span>
                <div className="w-[250px] h-[24px] shrink-0 border border-[#bdbdbd] rounded-[3px] bg-gradient-to-b from-[#fbfbfb] to-[#eeeeee] flex items-center justify-center">Редактировать</div>
              </div>
            </div>
            <div className="w-[13px] shrink-0 flex flex-col">
              <div className="h-[199px] bg-[#f8f8f8] flex justify-center pt-[5px]"><span className="w-0 h-0 border-l-[4px] border-r-[4px] border-b-[4px] border-l-transparent border-r-transparent border-b-[#555]" /></div>
              <div className="h-[138px] bg-[#e3e3e3]" />
              <div className="h-[14px] bg-[#f8f8f8] flex justify-center pt-[3px]"><span className="w-0 h-0 border-l-[4px] border-r-[4px] border-t-[4px] border-l-transparent border-r-transparent border-t-[#555]" /></div>
            </div>
          </div>
        </div>

        <div className="ml-[5px] flex-1 min-w-0 flex flex-col">
          <div className="h-[28px] shrink-0 flex items-end pl-[1px] border-b border-[#b4b4b4]">
            <div className="w-[109px] h-[27px] -mb-px bg-white border border-[#b8b8b8] border-b-white rounded-t-[3px] flex items-center pl-[10px] pt-[2px] gap-[3px]">
              <span className="w-[16px] h-[15px] border-2 border-t-[4px] border-[#333] bg-white shrink-0" />
              <span className="whitespace-nowrap">Layout #1</span>
              <span className="w-[11px] h-[11px] shrink-0 rounded-[2px] border border-[#777] flex items-center justify-center text-[#333] text-[9px] font-bold leading-none">✕</span>
            </div>
            <div className="w-[30px] h-[24px] bg-[#e8e8e8] border border-l-0 border-[#c0c0c0] rounded-t-[3px] flex items-center justify-center pt-[2px] text-[13px]">+</div>
          </div>
          <div className="h-[27px] shrink-0 flex items-center pl-[2px]">
            {['a', 'b'].map(k => <Tb key={k} w={26}><span className="-translate-y-px">{viewIcons[k]}</span></Tb>)}
            <Sep w={6} />
            <Tb w={26}><span className="-translate-y-px">{viewIcons.c}</span></Tb>
            <Sep w={6} />
            <Tb w={26}><span className="-translate-y-px">{viewIcons.d}</span></Tb><Tb w={26}><span className="-translate-y-px">{viewIcons.e}</span></Tb>
            <Sep w={6} />
            {['plus', 'minus', 'plusminus'].map(k => <Tb key={k} w={26}><span className="-translate-y-px">{viewIcons[k]}</span></Tb>)}
            <Sep w={6} />
            {['tri', 'pts', 'blk', 'frus', 'poly', 'dots', 'blue', 'graybox'].map(k => <Tb key={k} w={26}><span className="-translate-y-px">{viewIcons[k]}</span></Tb>)}
            <Tb w={28}><span className="-translate-y-px">{viewIcons.small}</span></Tb>
            {['tri2', 'pts2', 'triq', 'dotq', 'gplus', 'gminus', 'trash'].map(k => <Tb key={k} w={25.600}><span className="-translate-y-px">{viewIcons[k]}</span></Tb>)}
            <span className="ml-auto pt-[1px] font-bold underline text-[#111] whitespace-nowrap text-[11.5px]">RenderView1</span>
            <div className="ml-[12px] flex gap-[3px]">
              <div className="w-[24px] h-[24px] rounded-[3px] border border-[#c4c4c4] bg-[#f8f8f8] flex items-center justify-center"><div className="w-[14px] h-[14px] flex gap-[1px]"><span className="flex-1 bg-[#c4d0e8] border border-[#aaa]" /><span className="flex-1 bg-[#c4d0e8] border border-[#aaa]" /></div></div>
              <div className="w-[24px] h-[24px] rounded-[3px] border border-[#c4c4c4] bg-[#f8f8f8] flex items-center justify-center"><div className="w-[14px] h-[14px] flex flex-col gap-[1px]"><span className="flex-1 bg-[#c4d0e8] border border-[#aaa]" /><span className="flex-1 bg-[#c4d0e8] border border-[#aaa]" /></div></div>
              <div className="w-[24px] h-[24px] rounded-[3px] border border-[#c4c4c4] bg-[#f8f8f8] flex items-center justify-center"><span className="w-[18px] h-[17px] border-2 border-t-[5px] border-[#333] bg-white" /></div>
              <div className="w-[24px] h-[24px] rounded-[3px] border border-[#c4c4c4] bg-[#f8f8f8] flex items-center justify-center"><span className="w-[11px] h-[11px] rounded-[2px] border border-[#777] flex items-center justify-center text-[#333] text-[9px] font-bold leading-none">✕</span></div>
            </div>
          </div>
          <div className="ml-[2px] h-[716px] shrink-0 border-2 border-[#0000f0] bg-white overflow-hidden"><Render /></div>
          <div className="flex-1 relative flex pl-[275px] pt-[5px] gap-[3px]">
            <div className="w-[19px] h-[30px] bg-[#f8f8f8] border border-[#c4c4c4] rounded-[2px] flex justify-center pt-[4px]"><span className="text-[#999] text-[12px] font-bold leading-none">✖</span></div>
            <div className="w-[665px] h-[30px] border-l border-t border-[#b0b0b0] border-r-white border-r" />
          </div>
        </div>
      </div>
    </div>;
}
